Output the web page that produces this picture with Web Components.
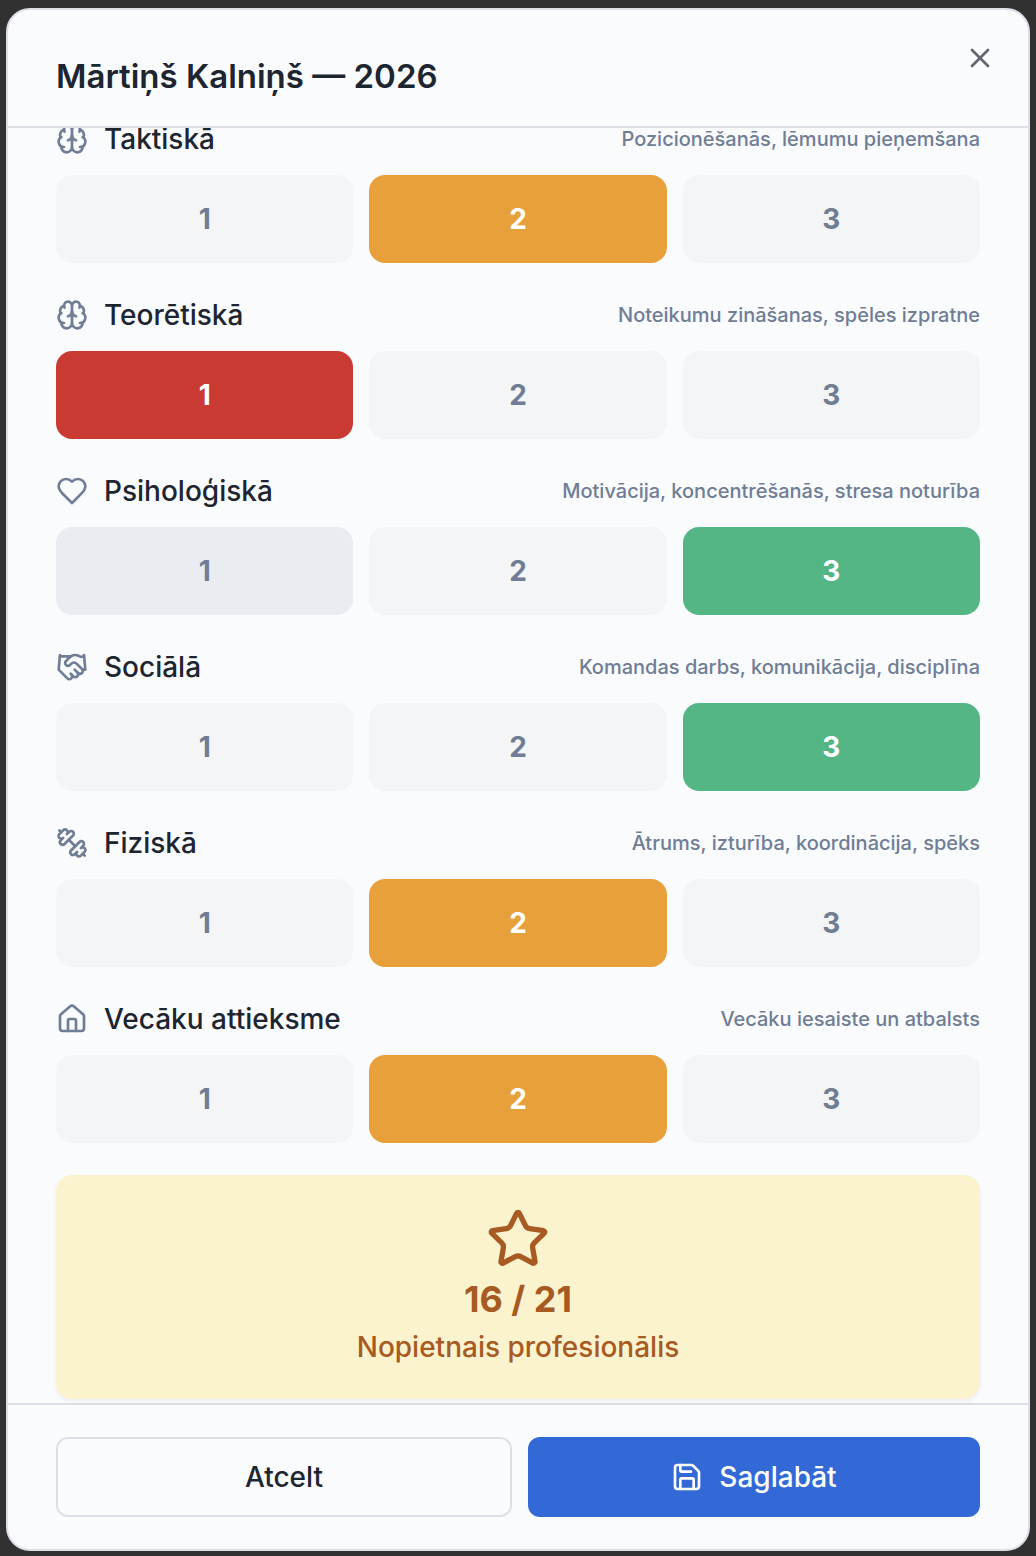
<!DOCTYPE html>
<html lang="lv">
<head>
<meta charset="utf-8">
<meta name="viewport" content="width=device-width, initial-scale=1">
<title>Mārtiņš Kalniņš — 2026</title>
<style>
  :root {
    --background: #f9fbfd;
    --foreground: #1d2530;
    --muted: #f4f5f7;
    --muted-hover: #e9edf2;
    --muted-foreground: #6f7d95;
    --border: #dcdfe6;
    --primary: #3369d6;
    --low: #c93b32;
    --mid: #e8a13a;
    --high: #55b685;
  }

  body {
    margin: 0;
    height: 100vh;
    box-sizing: border-box;
    padding: 8px 6px 5px;
    background: #313131;
    color: var(--foreground);
    font-family: Inter, "Liberation Sans", sans-serif;
  }
</style>
</head>
<body>

<rating-dialog heading="Mārtiņš Kalniņš — 2026">
  <rating-row icon="brain" label="Taktiskā" hint="Pozicionēšanās, lēmumu pieņemšana" value="2"></rating-row>
  <rating-row icon="brain" label="Teorētiskā" hint="Noteikumu zināšanas, spēles izpratne" value="1"></rating-row>
  <rating-row icon="heart" label="Psiholoģiskā" hint="Motivācija, koncentrēšanās, stresa noturība" value="3" hovered="1"></rating-row>
  <rating-row icon="handshake" label="Sociālā" hint="Komandas darbs, komunikācija, disciplīna" value="3"></rating-row>
  <rating-row icon="dumbbell" label="Fiziskā" hint="Ātrums, izturība, koordinācija, spēks" value="2"></rating-row>
  <rating-row icon="house" label="Vecāku attieksme" hint="Vecāku iesaiste un atbalsts" value="2"></rating-row>
  <score-card score="16 / 21">Nopietnais profesionālis</score-card>
  <action-button slot="actions" variant="outline">Atcelt</action-button>
  <action-button slot="actions" variant="primary" icon="save">Saglabāt</action-button>
</rating-dialog>

<script>
const ICONS = {
  brain: `<path d="M12 18V5"/>
    <path d="M15 13a4.17 4.17 0 0 1-3-4 4.17 4.17 0 0 1-3 4"/>
    <path d="M17.598 6.5A3 3 0 1 0 12 5a3 3 0 1 0-5.598 1.5"/>
    <path d="M17.997 5.125a4 4 0 0 1 2.526 5.77"/>
    <path d="M18 18a4 4 0 0 0 2-7.464"/>
    <path d="M19.967 17.483A4 4 0 1 1 12 18a4 4 0 1 1-7.967-.517"/>
    <path d="M6 18a4 4 0 0 1-2-7.464"/>
    <path d="M6.003 5.125a4 4 0 0 0-2.526 5.77"/>`,
  heart: `<path d="M19 14c1.49-1.46 3-3.21 3-5.5A5.5 5.5 0 0 0 16.5 3c-1.76 0-3 .5-4.5 2-1.5-1.5-2.74-2-4.5-2A5.5 5.5 0 0 0 2 8.5c0 2.3 1.5 4.05 3 5.5l7 7Z"/>`,
  handshake: `<path d="m11 17 2 2a1 1 0 1 0 3-3"/>
    <path d="m14 14 2.5 2.5a1 1 0 1 0 3-3l-3.88-3.88a3 3 0 0 0-4.24 0l-.88.88a1 1 0 1 1-3-3l2.81-2.81a5.79 5.79 0 0 1 7.06-.87l.47.28a2 2 0 0 0 1.42.25L21 4"/>
    <path d="m21 3 1 11h-2"/>
    <path d="M3 3 2 14l6.5 6.5a1 1 0 1 0 3-3"/>
    <path d="M3 4h8"/>`,
  dumbbell: `<path d="M14.4 14.4 9.6 9.6"/>
    <path d="M18.657 21.485a2 2 0 1 1-2.829-2.828l-1.767 1.768a2 2 0 1 1-2.829-2.829l6.364-6.364a2 2 0 1 1 2.829 2.829l-1.768 1.767a2 2 0 1 1 2.828 2.829z"/>
    <path d="m21.5 21.5-1.4-1.4"/>
    <path d="M3.9 3.9 2.5 2.5"/>
    <path d="M6.404 12.768a2 2 0 1 1-2.829-2.829l1.768-1.767a2 2 0 1 1-2.828-2.829l2.828-2.828a2 2 0 1 1 2.829 2.828l1.767-1.768a2 2 0 1 1 2.829 2.829z"/>`,
  house: `<path d="M15 21v-8a1 1 0 0 0-1-1h-4a1 1 0 0 0-1 1v8"/>
    <path d="M3 10a2 2 0 0 1 .709-1.528l7-5.999a2 2 0 0 1 2.582 0l7 5.999A2 2 0 0 1 21 10v9a2 2 0 0 1-2 2H5a2 2 0 0 1-2-2z"/>`,
  star: `<path d="M11.525 2.295a.53.53 0 0 1 .95 0l2.31 4.679a2.123 2.123 0 0 0 1.595 1.16l5.166.756a.53.53 0 0 1 .294.904l-3.736 3.638a2.123 2.123 0 0 0-.611 1.878l.882 5.14a.53.53 0 0 1-.771.56l-4.618-2.428a2.122 2.122 0 0 0-1.973 0L6.396 21.01a.53.53 0 0 1-.77-.56l.881-5.139a2.122 2.122 0 0 0-.611-1.879L2.16 9.795a.53.53 0 0 1 .294-.906l5.165-.755a2.122 2.122 0 0 0 1.597-1.16z"/>`,
  save: `<path d="M15.2 3a2 2 0 0 1 1.4.6l3.8 3.8a2 2 0 0 1 .6 1.4V19a2 2 0 0 1-2 2H5a2 2 0 0 1-2-2V5a2 2 0 0 1 2-2z"/>
    <path d="M17 21v-7a1 1 0 0 0-1-1H8a1 1 0 0 0-1 1v7"/>
    <path d="M7 3v4a1 1 0 0 0 1 1h7"/>`,
  close: `<path d="M18 6 6 18"/><path d="m6 6 12 12"/>`
};

// Line icon, sized with --icon-size
class LineIcon extends HTMLElement {
  connectedCallback() {
    if (this.shadowRoot) return;
    this.attachShadow({ mode: 'open' }).innerHTML = `
      <style>
        :host {
          display: block;
          flex: none;
          width: var(--icon-size, 32px);
          height: var(--icon-size, 32px);
        }
        svg {
          display: block;
          width: 100%;
          height: 100%;
        }
      </style>
      <svg viewBox="0 0 24 24" fill="none" stroke="currentColor" stroke-width="2"
        stroke-linecap="round" stroke-linejoin="round" aria-hidden="true">${ICONS[this.getAttribute('name')] || ''}</svg>
    `;
  }
}

// One criterion with a 1-3 scale
class RatingRow extends HTMLElement {
  connectedCallback() {
    if (this.shadowRoot) return;
    const label = this.getAttribute('label');
    const hovered = this.getAttribute('hovered');
    this.attachShadow({ mode: 'open' }).innerHTML = `
      <style>
        :host {
          display: flex;
          flex-direction: column;
          gap: 16px;
        }
        .head {
          display: flex;
          align-items: center;
          gap: 16px;
          line-height: 40px;
          color: var(--muted-foreground);
        }
        .label {
          flex: 1;
          font-size: 28px;
          font-weight: 500;
          color: var(--foreground);
          white-space: nowrap;
        }
        .hint {
          font-size: 20px;
          font-weight: 500;
          white-space: nowrap;
        }
        .scale {
          display: grid;
          grid-template-columns: repeat(3, 1fr);
          gap: 16px;
        }
        button {
          height: 88px;
          border: 0;
          border-radius: 16px;
          background: var(--muted);
          color: var(--muted-foreground);
          font: 700 28px/40px Inter, "Liberation Sans", sans-serif;
          cursor: pointer;
        }
        button:hover,
        button.hovered {
          background: var(--muted-hover);
        }
        button[aria-pressed="true"] {
          color: #fff;
        }
        button[value="1"][aria-pressed="true"] { background: var(--low); }
        button[value="2"][aria-pressed="true"] { background: var(--mid); }
        button[value="3"][aria-pressed="true"] { background: var(--high); }
      </style>
      <div class="head">
        <line-icon name="${this.getAttribute('icon')}"></line-icon>
        <span class="label" id="label">${label}</span>
        <span class="hint" id="hint">${this.getAttribute('hint')}</span>
      </div>
      <div class="scale" role="group" aria-labelledby="label" aria-describedby="hint">
        ${['1', '2', '3'].map(n => `<button type="button" value="${n}"${n === hovered ? ' class="hovered"' : ''}>${n}</button>`).join('')}
      </div>
    `;
    this.buttons = this.shadowRoot.querySelectorAll('button');
    this.buttons.forEach(button => {
      button.addEventListener('click', () => this.select(button.value));
    });
    this.select(this.getAttribute('value'));
  }

  select(value) {
    this.buttons.forEach(button => {
      button.setAttribute('aria-pressed', String(button.value === value));
    });
  }
}

class ScoreCard extends HTMLElement {
  connectedCallback() {
    if (this.shadowRoot) return;
    this.attachShadow({ mode: 'open' }).innerHTML = `
      <style>
        :host {
          --icon-size: 64px;
          display: flex;
          flex-direction: column;
          align-items: center;
          gap: 8px;
          padding: 32px;
          border-radius: 16px;
          background: #fbf3cd;
          box-shadow: 0 2px 4px rgba(29, 37, 48, 0.06);
          color: #a75a22;
          line-height: 40px;
          text-align: center;
        }
        .score {
          font-size: 36px;
          font-weight: 700;
        }
        .text {
          font-size: 28px;
          font-weight: 500;
        }
      </style>
      <line-icon name="star"></line-icon>
      <div class="score">${this.getAttribute('score')}</div>
      <div class="text"><slot></slot></div>
    `;
  }
}

class ActionButton extends HTMLElement {
  connectedCallback() {
    if (this.shadowRoot) return;
    const icon = this.getAttribute('icon');
    this.attachShadow({ mode: 'open' }).innerHTML = `
      <style>
        :host {
          display: flex;
          flex: 1;
          box-sizing: border-box;
          height: 80px;
          overflow: hidden;
          border-radius: 12px;
        }
        :host([variant="outline"]) {
          border: 2px solid var(--border);
        }
        button {
          display: flex;
          flex: 1;
          align-items: center;
          justify-content: center;
          gap: 16px;
          padding: 0 32px;
          border: 0;
          background: var(--background);
          color: inherit;
          font: 500 28px/40px Inter, "Liberation Sans", sans-serif;
          cursor: pointer;
        }
        :host([variant="primary"]) button {
          background: var(--primary);
          color: #fff;
        }
      </style>
      <button type="button">${icon ? `<line-icon name="${icon}"></line-icon>` : ''}<slot></slot></button>
    `;
  }
}

class RatingDialog extends HTMLElement {
  connectedCallback() {
    if (this.shadowRoot) return;
    this.attachShadow({ mode: 'open' }).innerHTML = `
      <style>
        :host {
          display: flex;
          flex-direction: column;
          height: 100%;
          box-sizing: border-box;
          overflow: hidden;
          border: 2px solid var(--border);
          border-radius: 24px;
          background: var(--background);
        }
        header {
          display: flex;
          align-items: flex-start;
          justify-content: space-between;
          padding: 32px 32px 32px 48px;
          border-bottom: 2px solid var(--border);
        }
        h2 {
          margin: 0;
          padding-top: 16px;
          font-size: 33px;
          font-weight: 600;
          line-height: 36px;
        }
        .close {
          padding: 0;
          border: 0;
          background: none;
          color: #62666e;
          cursor: pointer;
        }
        /* Content is kept at its end, the start runs under the header */
        main {
          display: flex;
          flex: 1;
          flex-direction: column;
          justify-content: flex-end;
          gap: 32px;
          min-height: 0;
          overflow: hidden;
          padding: 0 48px 4px;
        }
        ::slotted(*) {
          flex-shrink: 0;
        }
        footer {
          display: flex;
          gap: 16px;
          padding: 32px 48px;
          border-top: 2px solid var(--border);
        }
      </style>
      <header>
        <h2 id="title">${this.getAttribute('heading')}</h2>
        <button class="close" type="button" aria-label="Aizvērt"><line-icon name="close"></line-icon></button>
      </header>
      <main><slot></slot></main>
      <footer><slot name="actions"></slot></footer>
    `;
    this.setAttribute('role', 'dialog');
    this.setAttribute('aria-label', this.getAttribute('heading'));
  }
}

customElements.define('line-icon', LineIcon);
customElements.define('rating-row', RatingRow);
customElements.define('score-card', ScoreCard);
customElements.define('action-button', ActionButton);
customElements.define('rating-dialog', RatingDialog);
</script>
</body>
</html>
